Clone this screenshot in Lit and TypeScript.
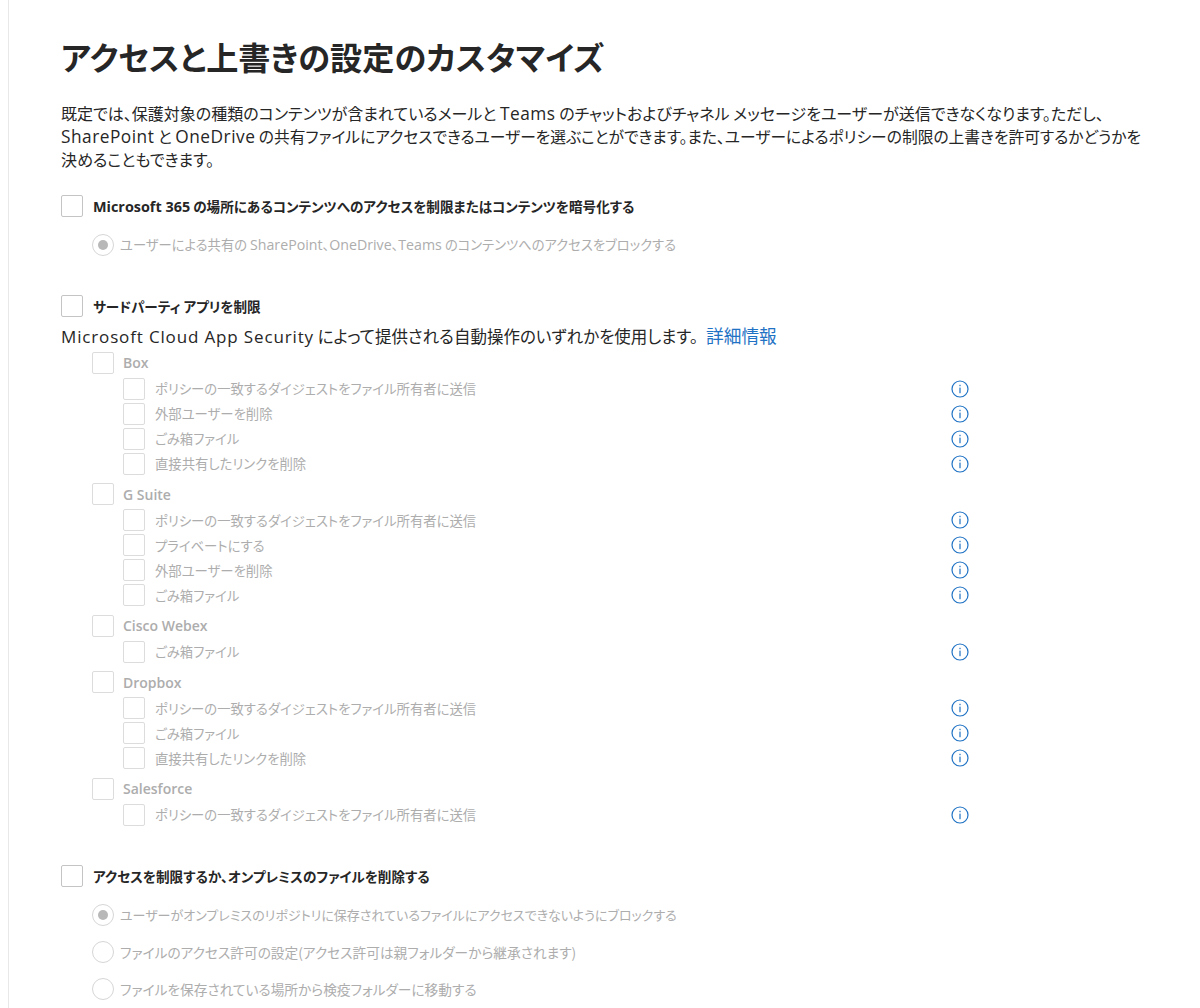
import { LitElement, html, css } from "lit";
import { customElement } from "lit/decorators.js";

const groups: [string, string[]][] = [
  ["Box", ["ポリシーの一致するダイジェストをファイル所有者に送信", "外部ユーザーを削除", "ごみ箱ファイル", "直接共有したリンクを削除"]],
  ["G Suite", ["ポリシーの一致するダイジェストをファイル所有者に送信", "プライベートにする", "外部ユーザーを削除", "ごみ箱ファイル"]],
  ["Cisco Webex", ["ごみ箱ファイル"]],
  ["Dropbox", ["ポリシーの一致するダイジェストをファイル所有者に送信", "ごみ箱ファイル", "直接共有したリンクを削除"]],
  ["Salesforce", ["ポリシーの一致するダイジェストをファイル所有者に送信"]],
];

const info = html`<svg class="info" viewBox="0 0 18 18" width="18" height="18" aria-hidden="true">
  <circle cx="9" cy="9" r="8" fill="none" stroke="#1f72c4" stroke-width="1.2"></circle>
  <rect x="8.4" y="7.6" width="1.2" height="5.6" fill="#1f72c4"></rect>
  <rect x="8.4" y="4.8" width="1.2" height="1.4" fill="#1f72c4"></rect>
</svg>`;

@customElement("app-root")
export class AppRoot extends LitElement {
  static styles = css`
    :host {
      display: block;
      height: 1008px;
      overflow: hidden;
      background: #fff;
      font-family: "Noto Sans CJK JP", "Noto Sans", sans-serif;
      font-feature-settings: "palt";
      color: #262626;
    }
    .page {
      margin-left: 8px;
      height: 1008px;
      box-sizing: border-box;
      border-left: 1px solid #e8e8e8;
      padding: 34px 40px 0 52px;
    }
    h1 {
      margin: 0 0 23.5px;
      font-size: 32.2px;
      line-height: 44px;
      font-weight: 700;
      color: #262626;
    }
    .la {
      font-family: "Open Sans", sans-serif;
      line-height: 0;
    }
    .intro {
      margin: 0 0 23.5px;
      font-size: 16px;
      line-height: 23px;
    }
    .intro .ln { display: block; white-space: nowrap; }
    .intro .ln2 { font-size: 15.75px; }
    .intro .la { font-size: 17.3px; letter-spacing: 0.5px; }
    .box {
      flex: none;
      width: 22px;
      height: 22px;
      box-sizing: border-box;
      border: 1px solid #c4c4c4;
      border-radius: 2px;
      background: #fff;
    }
    .dim .box { border-color: #dcdcdc; }
    .head {
      display: flex;
      align-items: center;
      gap: 10px;
      height: 24px;
      font-size: 13.6px;
      font-weight: 700;
    }
    .head .la { font-size: 14.4px; }
    .radios {
      display: flex;
      flex-direction: column;
      gap: 14.2px;
      margin: 15px 0 0 31px;
    }
    .radio {
      display: flex;
      align-items: center;
      gap: 6px;
      height: 23px;
      font-size: 13.3px;
      color: #adadad;
    }
    .radio .la { font-size: 14.2px; }
    .radio.tight { font-size: 13px; }
    .radio.wide { font-size: 13.7px; }
    .dot {
      flex: none;
      width: 22px;
      height: 22px;
      box-sizing: border-box;
      border: 1px solid #d6d6d6;
      border-radius: 50%;
      display: flex;
      align-items: center;
      justify-content: center;
    }
    .dot.on::after {
      content: "";
      width: 10px;
      height: 10px;
      border-radius: 50%;
      background: #b8b8b8;
    }
    .gap { margin-top: 37.5px; }
    .gap.last { margin-top: 37px; }
    .note {
      margin-top: 5px;
      font-size: 16.5px;
      line-height: 24px;
    }
    .note .la { font-size: 17px; letter-spacing: 0.85px; }
    a { color: #1f72c4; text-decoration: none; margin-left: 8px; font-size: 17.7px; }
    .tree { margin: 2.5px 0 0 31px; width: 877px; }
    .group {
      display: flex;
      align-items: center;
      gap: 9px;
      height: 25px;
      font-family: "Open Sans", sans-serif;
      font-size: 14px;
      font-weight: 600;
      color: #adadad;
    }
    .group + .sub { margin-top: 1px; }
    .sub + .group { margin-top: 5.5px; }
    .sub {
      display: flex;
      align-items: center;
      gap: 10px;
      height: 25px;
      margin-left: 31px;
      font-size: 13.35px;
      color: #adadad;
    }
    .sub span { flex: 1; }
    .info { flex: none; }
  `;

  render() {
    return html`<div class="page">
      <h1>アクセスと上書きの設定のカスタマイズ</h1>
      <p class="intro">
        <span class="ln">既定では、保護対象の種類のコンテンツが含まれているメールと <span class="la">Teams</span> のチャットおよびチャネル メッセージをユーザーが送信できなくなります。ただし、</span>
        <span class="ln ln2"><span class="la">SharePoint</span> と <span class="la">OneDrive</span> の共有ファイルにアクセスできるユーザーを選ぶことができます。また、ユーザーによるポリシーの制限の上書きを許可するかどうかを</span>
        <span class="ln">決めることもできます。</span>
      </p>

      <div class="head"><div class="box"></div><div><span class="la">Microsoft 365</span> の場所にあるコンテンツへのアクセスを制限またはコンテンツを暗号化する</div></div>
      <div class="radios">
        <div class="radio"><div class="dot on"></div><div>ユーザーによる共有の <span class="la">SharePoint</span>、<span class="la">OneDrive</span>、<span class="la">Teams</span> のコンテンツへのアクセスをブロックする</div></div>
      </div>

      <div class="head gap"><div class="box"></div>サードパーティ アプリを制限</div>
      <div class="note"><span class="la">Microsoft Cloud App Security</span> によって提供される自動操作のいずれかを使用します。<a href="#">詳細情報</a></div>
      <div class="tree dim">
        ${groups.map(([name, items]) => html`
          <div class="group"><div class="box"></div>${name}</div>
          ${items.map((t) => html`<div class="sub"><div class="box"></div><span>${t}</span>${info}</div>`)}
        `)}
      </div>

      <div class="head gap last"><div class="box"></div>アクセスを制限するか、オンプレミスのファイルを削除する</div>
      <div class="radios">
        <div class="radio tight"><div class="dot on"></div>ユーザーがオンプレミスのリポジトリに保存されているファイルにアクセスできないようにブロックする</div>
        <div class="radio wide"><div class="dot"></div>ファイルのアクセス許可の設定(アクセス許可は親フォルダーから継承されます)</div>
        <div class="radio wide"><div class="dot"></div>ファイルを保存されている場所から検疫フォルダーに移動する</div>
      </div>
    </div>`;
  }
}
